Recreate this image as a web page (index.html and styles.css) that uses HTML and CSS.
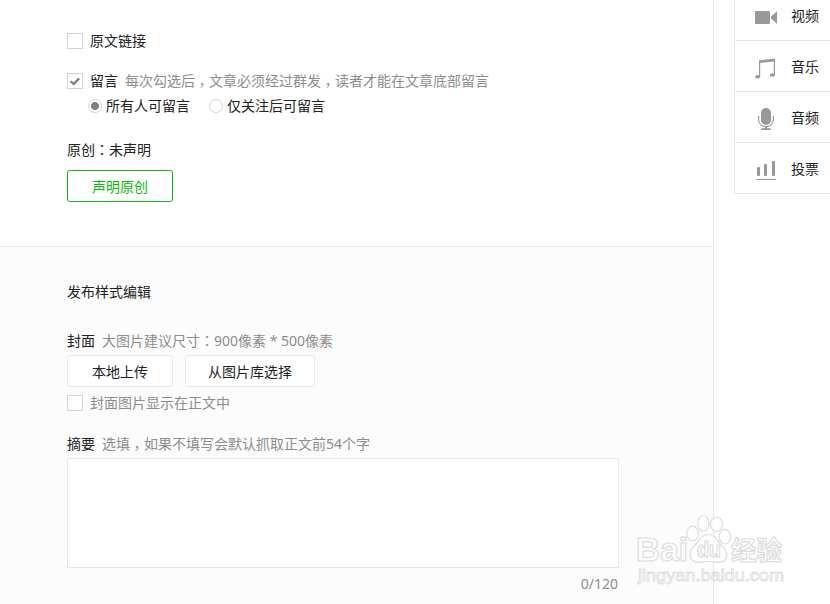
FILE: index.html
```html
<!DOCTYPE html>
<html lang="zh-CN">
<head>
    <meta charset="utf-8" />
    <title>发布样式编辑</title>
    <link rel="stylesheet" href="styles.css">
</head>
<body>
    <div class="wrap">
        <div class="main">
            <div class="setting">
                <div class="row link_row"><i class="checkbox"></i><span>原文链接</span></div>
                <div class="row comment_row">
                    <i class="checkbox">
                        <svg width="14" height="14" viewBox="0 0 14 14"><path d="M2.6 7.2 L5.6 10 L11.2 4.4" fill="none" stroke="#7c7c7c" stroke-width="2.2" /></svg>
                    </i>
                    <span>留言</span>
                    <span class="tips">每次勾选后<b class="punc comma" lang="zh-TW">，</b>文章必须经过群发<b class="punc comma" lang="zh-TW">，</b>读者才能在文章底部留言</span>
                </div>
                <div class="row radio_row">
                    <i class="radio radio_active"></i><span>所有人可留言</span>
                    <i class="radio radio_next"></i><span>仅关注后可留言</span>
                </div>
                <div class="row origin_row"><span>原创<b class="punc" lang="zh-TW">：</b>未声明</span></div>
                <a class="btn btn_primary" href="javascript://">声明原创</a>
            </div>
            <div class="publish">
                <div class="row title_row">发布样式编辑</div>
                <div class="row cover_row">
                    <span>封面</span>
                    <span class="tips">大图片建议尺寸<b class="punc" lang="zh-TW">：</b>900像素 * 500像素</span>
                </div>
                <div class="btns">
                    <a class="btn" href="javascript://">本地上传</a>
                    <a class="btn btn_wide" href="javascript://">从图片库选择</a>
                </div>
                <div class="row show_row"><i class="checkbox"></i><span class="gray">封面图片显示在正文中</span></div>
                <div class="row digest_row">
                    <span>摘要</span>
                    <span class="tips">选填<b class="punc comma" lang="zh-TW">，</b>如果不填写会默认抓取正文前54个字</span>
                </div>
                <textarea class="digest"></textarea>
                <div class="row count">0/120</div>
            </div>
        </div>
        <ul class="side">
            <li>
                <svg class="icon" width="24" height="24" viewBox="0 0 24 24" fill="#999">
                    <rect x="2" y="6" width="15" height="13" rx="1" />
                    <path d="M24 6.2 V18.8 L18 13.6 V11.4 Z" />
                </svg>
                <span>视频</span>
            </li>
            <li>
                <svg class="icon" width="24" height="24" viewBox="0 0 24 24" fill="#999">
                    <path d="M6 4.4 L22 2.6 V19 H20.8 V5.4 L7.2 7 V21 H6 Z" />
                    <ellipse cx="4.6" cy="20.8" rx="2.6" ry="1.8" />
                    <ellipse cx="19.4" cy="19" rx="2.6" ry="1.8" />
                </svg>
                <span>音乐</span>
            </li>
            <li>
                <svg class="icon" width="24" height="24" viewBox="0 0 24 24" fill="#999">
                    <rect x="8" y="1" width="10" height="17" rx="5" />
                    <path d="M5.6 9 V12 C5.6 17 8.8 19.6 13 19.6 C17.2 19.6 20.4 17 20.4 12 V9" fill="none" stroke="#999" stroke-width="1.2" />
                    <rect x="12" y="19.5" width="2" height="2.5" />
                    <rect x="8" y="21.3" width="10" height="1.7" rx="0.8" />
                </svg>
                <span>音频</span>
            </li>
            <li>
                <svg class="icon" width="24" height="24" viewBox="0 0 24 24" fill="#999">
                    <rect x="4" y="9" width="3" height="9" rx="1" />
                    <rect x="11" y="6" width="3" height="12" rx="1" />
                    <rect x="19" y="3" width="3" height="15" rx="1" />
                    <rect x="3" y="21" width="20" height="1" />
                </svg>
                <span>投票</span>
            </li>
        </ul>
    </div>
    <svg class="watermark" width="160" height="80" viewBox="0 0 160 80">
        <g class="mark">
            <text class="mark_big" x="3" y="51" textLength="52" lengthAdjust="spacingAndGlyphs">Bai</text>
            <ellipse cx="59.7" cy="23.5" rx="5.8" ry="7.3" />
            <ellipse cx="70.5" cy="13.3" rx="5.6" ry="7.8" />
            <ellipse cx="83.5" cy="14.3" rx="6" ry="7.3" />
            <ellipse cx="92" cy="26.7" rx="5.8" ry="7.3" />
            <path d="M75 24.5 C68 24.5 66 31 62 35 C58 39 55.5 42 57.5 47 C59.5 52.5 65 53 70 51.8 C74 51 77 51 81 51.8 C87 53 92 52.5 93.5 47 C95 41 91 38 88 35 C84 31 83 24.5 75 24.5 Z" />
            <text class="mark_du" x="64" y="47" textLength="24" lengthAdjust="spacingAndGlyphs">du</text>
            <text class="mark_cn" x="98" y="50" textLength="51" lengthAdjust="spacingAndGlyphs">经验</text>
            <text class="mark_url" x="5" y="71" textLength="146" lengthAdjust="spacingAndGlyphs">jingyan.baidu.com</text>
        </g>
    </svg>
</body>
</html>
```
FILE: styles.css
```css
html, body, ul, li {
    margin:0;
    padding:0;
}
body {
    height:604px;
    overflow:hidden;
    position:relative;
    background:#fff;
    color:#222;
    font:14px/22px "Noto Sans", "Noto Sans CJK SC", sans-serif;
}
.wrap {
    display:flex;
    align-items:flex-start;
    height:604px;
}
.main {
    box-sizing:border-box;
    width:714px;
    height:604px;
    flex:none;
    border-right:1px solid #e7e7eb;
}
.setting {
    box-sizing:border-box;
    height:246px;
    padding:30px 0 0 67px;
}
.publish {
    box-sizing:border-box;
    height:358px;
    padding:34px 0 0 67px;
    border-top:1px solid #e7e7eb;
    background:#fcfcfc;
}
.row {
    display:flex;
    align-items:center;
    height:22px;
    white-space:nowrap;
}
.comment_row {
    margin-top:18px;
}
.radio_row {
    margin-top:3px;
    padding-left:21px;
}
.origin_row {
    margin:22px 0 9px;
}
.cover_row {
    margin:27px 0 3px;
}
.show_row {
    margin-top:5px;
}
.digest_row {
    margin:19px 0 3px;
}
.tips {
    margin-left:7px;
    color:#8d8d8d;
}
.gray {
    color:#8d8d8d;
}
/* 标点居中 */
.punc {
    font-family:"Noto Sans CJK TC", sans-serif;
    font-weight:normal;
    line-height:1;
}
.comma {
    line-height:0;
    vertical-align:-4px;
}
.checkbox {
    box-sizing:border-box;
    width:16px;
    height:16px;
    margin-right:7px;
    border:1px solid #d3d3d6;
    background:#fff;
}
    .checkbox svg {
        display:block;
    }
.radio {
    box-sizing:border-box;
    width:14px;
    height:14px;
    margin-right:4px;
    border:1px solid #d3d3d6;
    border-radius:50%;
    background:#fff;
}
.radio_active {
    background:radial-gradient(circle, #7f7f7f 3.7px, #fff 4.3px);
}
.radio_next {
    margin-left:19px;
}
.btns {
    display:flex;
    gap:12px;
}
.btn {
    display:block;
    box-sizing:border-box;
    width:106px;
    height:32px;
    line-height:32px;
    border:1px solid #e7e7eb;
    border-radius:3px;
    background:#fff;
    color:#222;
    text-align:center;
    text-decoration:none;
}
.btn_wide {
    width:130px;
}
.btn_primary {
    border-color:#0eb70d;
    color:#0eb70d;
}
.digest {
    display:block;
    box-sizing:border-box;
    width:552px;
    height:110px;
    margin:0;
    border:1px solid #e7e7eb;
    background:#fff;
    resize:none;
    outline:none;
}
.count {
    justify-content:flex-end;
    width:551px;
    margin-top:5px;
    color:#8d8d8d;
}
.side {
    flex:1;
    margin-left:20px;
    margin-top:-10px;
    border-left:1px solid #e7e7eb;
    list-style:none;
}
    .side li {
        display:flex;
        align-items:center;
        box-sizing:border-box;
        height:51px;
        padding:2px 0 0 18px;
        border-bottom:1px solid #e7e7eb;
        white-space:nowrap;
    }
    .side .icon {
        flex:none;
        margin:2px 14px 0 0;
    }
.watermark {
    position:absolute;
    left:633px;
    top:510px;
}
.mark {
    fill:#fff;
    fill-opacity:.75;
    stroke:#dcdcdc;
    stroke-width:1.2;
    font-family:"Liberation Sans", sans-serif;
    font-weight:bold;
}
.mark_big {
    font-size:33px;
}
.mark_du {
    font-size:22px;
}
.mark_cn {
    font-family:"Noto Sans CJK SC", sans-serif;
    font-size:26px;
}
.mark_url {
    font-size:17px;
    font-weight:normal;
    stroke-width:.8;
}
```
